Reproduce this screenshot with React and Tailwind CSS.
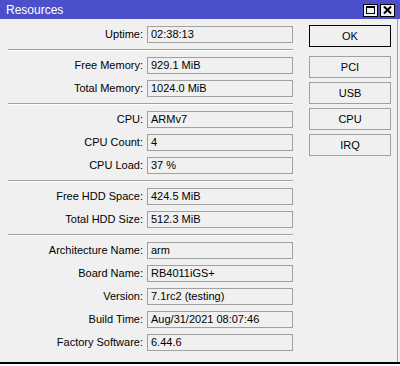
import React from 'react'

const groups = [
  [['Uptime', '02:38:13']],
  [
    ['Free Memory', '929.1 MiB'],
    ['Total Memory', '1024.0 MiB'],
  ],
  [
    ['CPU', 'ARMv7'],
    ['CPU Count', '4'],
    ['CPU Load', '37 %'],
  ],
  [
    ['Free HDD Space', '424.5 MiB'],
    ['Total HDD Size', '512.3 MiB'],
  ],
  [
    ['Architecture Name', 'arm'],
    ['Board Name', 'RB4011iGS+'],
    ['Version', '7.1rc2 (testing)'],
    ['Build Time', 'Aug/31/2021 08:07:46'],
    ['Factory Software', '6.44.6'],
  ],
]

function Row({ label, value }) {
  return (
    <div className="flex items-center h-[17px]">
      <div className="w-[143px] text-right whitespace-nowrap">{label}:</div>
      <div className="ml-[4px] w-[146px] h-[17px] border border-[#a0a0a0] pl-[3px] leading-[15px] whitespace-nowrap overflow-hidden">
        {value}
      </div>
    </div>
  )
}

function Button({ children, primary, className = '' }) {
  return (
    <div
      className={`h-[22px] flex items-center justify-center bg-[#f0f0f0] border ${
        primary ? 'border-black' : 'border-[#a0a0a0]'
      } ${className}`}
    >
      {children}
    </div>
  )
}

export default function App() {
  return (
    <div className="w-[400px] h-[366px] overflow-hidden bg-white text-black text-[11px] font-['Liberation_Sans',Arial,sans-serif]">
      {/* Title bar */}
      <div className="h-[19px] bg-[#4b4fc9] flex items-center pl-[6px] pr-[5px]">
        <span className="text-white text-[12px] leading-none">Resources</span>
        <div className="ml-auto flex gap-[2px] pt-[1px]">
          <div className="w-[15px] h-[13px] bg-[#f0f0f0] border border-black flex items-center justify-center">
            <div className="w-[9px] h-[8px] border border-black border-t-2" />
          </div>
          <div className="w-[15px] h-[13px] bg-[#f0f0f0] border border-black flex items-center justify-center">
            <svg width="9" height="8" viewBox="0 0 9 8">
              <path d="M1 0.5 L8 7.5 M8 0.5 L1 7.5" stroke="black" strokeWidth="2" />
            </svg>
          </div>
        </div>
      </div>

      {/* Body */}
      <div className="flex h-[343px] bg-[#f0f0f0]">
        <div className="w-[398px] border-r border-[#a0a0a0] flex">
          <div className="w-[293px] pt-[7px] flex flex-col">
            {groups.map((rows, i) => (
              <React.Fragment key={i}>
                {i > 0 && (
                  <div className="ml-[8px] w-[285px] h-[2px] border-t border-[#a0a0a0] border-b border-b-white my-[6px]" />
                )}
                <div className="flex flex-col gap-[6px]">
                  {rows.map(([label, value]) => (
                    <Row key={label} label={label} value={value} />
                  ))}
                </div>
              </React.Fragment>
            ))}
          </div>

          <div className="ml-[16px] w-[82px] pt-[6px] flex flex-col">
            <Button primary>OK</Button>
            <Button className="mt-[9px]">PCI</Button>
            <Button className="mt-[4px]">USB</Button>
            <Button className="mt-[4px]">CPU</Button>
            <Button className="mt-[4px]">IRQ</Button>
          </div>
        </div>
      </div>

      {/* Window underneath */}
      <div className="h-[2px] bg-black" />
      <div className="h-[2px] overflow-hidden">
        <div className="pl-[2px] text-[11px] leading-[11px] -mt-[1px] tracking-[1px]">oooooooooooo</div>
      </div>
    </div>
  )
}
